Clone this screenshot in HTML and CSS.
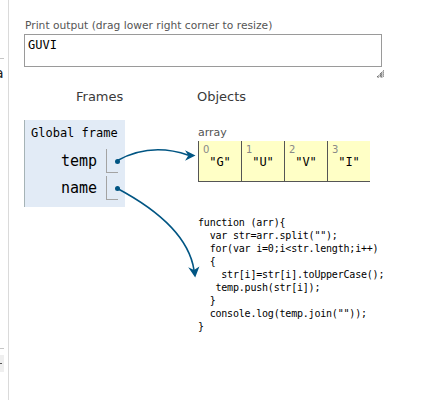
FILE: index.html
```html
<!DOCTYPE html>
<html>
<head>
<meta charset="utf-8">
<link rel="stylesheet" href="styles.css">
</head>
<body>
<div class="page">
  <aside class="side">
    <div class="side-top">
      <div class="side-rule"></div>
      <div class="side-text">a</div>
    </div>
    <div class="side-bottom">
      <div class="side-rule"></div>
      <div class="side-btn"><span class="side-dash"></span></div>
    </div>
  </aside>
  <main class="main">
    <div class="out-label">Print output (drag lower right corner to resize)</div>
    <div class="out-box">GUVI</div>
    <div class="grip-row">
      <svg class="grip" width="8" height="8" viewBox="0 0 8 8">
        <path d="M7.5 0.5 L0.5 7.5 M7.5 2.5 L2.5 7.5 M7.5 4.5 L4.5 7.5 M7.5 6.5 L6.5 7.5" stroke="#333" stroke-width="1" stroke-dasharray="1 1" fill="none"/>
        <path d="M7.5 1.5 L1.5 7.5 M7.5 3.5 L3.5 7.5 M7.5 5.5 L5.5 7.5" stroke="#666" stroke-width="1" stroke-dasharray="1 1" fill="none"/>
      </svg>
    </div>
    <div class="viz">
      <section class="stack">
        <div class="viz-head frames-head">Frames</div>
        <div class="frame">
          <div class="frame-head">Global frame</div>
          <div class="frame-vars">
            <div class="var">
              <span class="var-name">temp</span>
              <span class="var-val"><span class="dot"></span></span>
            </div>
            <div class="var">
              <span class="var-name">name</span>
              <span class="var-val"><span class="dot"></span></span>
            </div>
          </div>
        </div>
      </section>
      <section class="heap">
        <div class="viz-head objects-head">Objects</div>
        <div class="obj-label">array</div>
        <div class="arr">
          <div class="cell"><div class="idx">0</div><div class="val">"G"</div></div>
          <div class="cell"><div class="idx">1</div><div class="val">"U"</div></div>
          <div class="cell"><div class="idx">2</div><div class="val">"V"</div></div>
          <div class="cell"><div class="idx">3</div><div class="val">"I"</div></div>
        </div>
<pre class="code">function (arr){
  var str=arr.split("");
  for(var i=0;i&lt;str.length;i++)
  {
    str[i]=str[i].toUpperCase();
   temp.push(str[i]);
  }
  console.log(temp.join(""));
}</pre>
      </section>
    </div>
  </main>
  <svg class="arrows" width="436" height="400" viewBox="0 0 436 400">
    <path d="M116.5 161 C138 149 162 146 188.5 155.3" stroke="#005583" stroke-width="1.6" fill="none"/>
    <polygon points="195.5,155.6 185,150.3 188.3,155.4 185,160.8" fill="#005583"/>
    <path d="M116.5 188 C158 210 189 238 194 270" stroke="#005583" stroke-width="1.6" fill="none"/>
    <polygon points="195.2,277.5 188.2,267.2 194,270 199.4,266.4" fill="#005583"/>
  </svg>
</div>
</body>
</html>
```
FILE: styles.css
```css
* {
  box-sizing: border-box;
}

html,
body {
  margin: 0;
  padding: 0;
  background: #ffffff;
}

body {
  overflow: hidden;
}

.page {
  position: relative;
  display: flex;
  width: 436px;
  height: 400px;
}

/* cut-off left panel */
.side {
  flex: none;
  width: 9px;
  height: 400px;
  border-right: 1px solid #dadada;
  display: flex;
  flex-direction: column;
  overflow: hidden;
}

.side-top {
  width: 4px;
  margin-top: 58px;
  overflow: hidden;
}

.side-rule {
  width: 4px;
  height: 1px;
  background: #c6c6c6;
}

.side-text {
  margin-top: 7px;
  margin-left: -5px;
  font: 14px/14px "DejaVu Sans", sans-serif;
  color: #222;
  white-space: nowrap;
}

.side-bottom {
  width: 4px;
  margin-top: auto;
  margin-bottom: 28px;
}

.side-btn {
  margin-top: 6px;
  height: 17px;
  background: #efefef;
  display: flex;
  align-items: center;
}

.side-dash {
  width: 2px;
  height: 1px;
  background: #555;
}

/* main area */
.main {
  flex: 1;
  padding: 19px 0 0 15px;
}

.out-label {
  font: 10.7px/13px "DejaVu Sans", sans-serif;
  color: #555555;
  padding-left: 1px;
  white-space: nowrap;
}

.out-box {
  margin-top: 2px;
  width: 358px;
  height: 33px;
  border: 1px solid #9a9a9a;
  padding: 3px 3px 0 3px;
  font: 12px/15px "DejaVu Sans Mono", monospace;
  color: #000;
}

.grip-row {
  width: 360px;
  height: 22px;
  display: flex;
  justify-content: flex-end;
  align-items: flex-start;
}

.grip {
  margin-top: 3px;
  display: block;
}

.viz {
  display: flex;
  align-items: flex-start;
}

.stack {
  flex: none;
  width: 174px;
}

.viz-head {
  font: 13px/16px "DejaVu Sans", sans-serif;
  color: #3a3a3a;
  white-space: nowrap;
}

.frames-head {
  padding-left: 52px;
}

.objects-head {
  margin-left: -1px;
}

.frame {
  margin-top: 15px;
  width: 101px;
  background: #e2ebf6;
  border-left: 1px solid #a6b3b6;
  padding: 6px 7px 7px 6px;
}

.frame-head {
  font: 12px/15px "DejaVu Sans Mono", monospace;
  color: #000;
  white-space: nowrap;
}

.frame-vars {
  margin-top: 8px;
  display: flex;
  flex-direction: column;
  gap: 3px;
}

.var {
  display: flex;
  height: 24px;
}

.var-name {
  flex: 1;
  text-align: right;
  padding-right: 9px;
  font: 15px/24px "DejaVu Sans Mono", monospace;
  color: #000;
}

.var-val {
  flex: none;
  width: 12px;
  height: 24px;
  border-left: 1px solid #a3a3a3;
  border-bottom: 1px solid #a3a3a3;
  display: flex;
  align-items: center;
  justify-content: flex-end;
}

.dot {
  width: 5px;
  height: 5px;
  border-radius: 50%;
  background: #005583;
  margin-right: -1.5px;
  margin-top: 1px;
}

.heap {
  flex: 1;
}

.obj-label {
  margin-top: 21px;
  font: 11px/14px "DejaVu Sans", sans-serif;
  color: #555;
}

.arr {
  margin-top: 1px;
  display: flex;
}

.cell {
  width: 43px;
  height: 41px;
  background: #ffffc6;
  border-left: 1px solid #555;
  border-bottom: 1px solid #555;
  padding: 3px 0 0 4px;
}

.idx {
  font: 10px/11px "DejaVu Sans", sans-serif;
  color: #888;
}

.val {
  margin-left: -4px;
  text-align: center;
  font: 12px/15px "DejaVu Sans Mono", monospace;
  color: #000;
}

.code {
  margin: 34px 0 0 0;
  font: 10px/13px "DejaVu Sans Mono", monospace;
  letter-spacing: -0.2px;
  color: #000;
}

.arrows {
  position: absolute;
  left: 0;
  top: 0;
  pointer-events: none;
}
```
